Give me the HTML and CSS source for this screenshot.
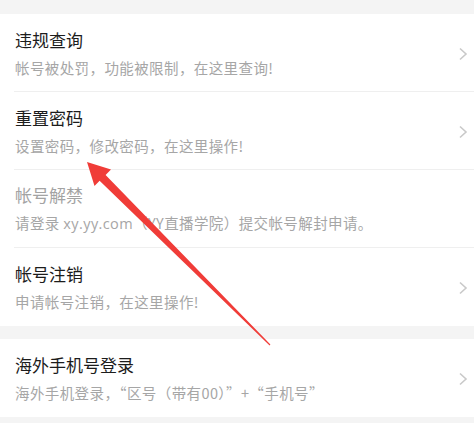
FILE: index.html
```html
<!DOCTYPE html>
<html lang="zh">
<head>
<meta charset="utf-8">
<link rel="stylesheet" href="styles.css">
</head>
<body>
<div class="page">
  <div class="group">
    <div class="item">
      <div class="row">
        <div class="text">
          <div class="title">违规查询</div>
          <div class="sub">帐号被处罚，功能被限制，在这里查询!</div>
        </div>
        <svg class="chev" width="10" height="14" viewBox="0 0 10 14"><polyline points="2,1.5 8,7 2,12.5" fill="none" stroke="#c9c9c9" stroke-width="1.6"/></svg>
      </div>
    </div>
    <div class="item">
      <div class="row">
        <div class="text">
          <div class="title">重置密码</div>
          <div class="sub">设置密码，修改密码，在这里操作!</div>
        </div>
        <svg class="chev" width="10" height="14" viewBox="0 0 10 14"><polyline points="2,1.5 8,7 2,12.5" fill="none" stroke="#c9c9c9" stroke-width="1.6"/></svg>
      </div>
    </div>
    <div class="item">
      <div class="row">
        <div class="text">
          <div class="title disabled">帐号解禁</div>
          <div class="sub">请登录 <span class="latin">xy.yy.com</span>（YY直播学院）提交帐号解封申请。</div>
        </div>
      </div>
    </div>
    <div class="item last">
      <div class="row">
        <div class="text">
          <div class="title">帐号注销</div>
          <div class="sub">申请帐号注销，在这里操作!</div>
        </div>
        <svg class="chev" width="10" height="14" viewBox="0 0 10 14"><polyline points="2,1.5 8,7 2,12.5" fill="none" stroke="#c9c9c9" stroke-width="1.6"/></svg>
      </div>
    </div>
  </div>
  <div class="group">
    <div class="item last">
      <div class="row">
        <div class="text">
          <div class="title">海外手机号登录</div>
          <div class="sub">海外手机登录，“区号（带有00）”+“手机号”</div>
        </div>
        <svg class="chev" width="10" height="14" viewBox="0 0 10 14"><polyline points="2,1.5 8,7 2,12.5" fill="none" stroke="#c9c9c9" stroke-width="1.6"/></svg>
      </div>
    </div>
  </div>
</div>
<svg class="arrow" width="474" height="423" viewBox="0 0 474 423">
  <polygon points="87,162 111,169.5 105.6,175 270.4,344.6 269.6,345.4 99.6,180.8 94.5,186" fill="#f03c38"/>
</svg>
</body>
</html>
```
FILE: styles.css
```css
html, body {
  margin: 0;
  padding: 0;
}
body {
  background: #f4f4f4;
  width: 474px;
  height: 423px;
  overflow: hidden;
  position: relative;
  font-family: "Noto Sans CJK SC", "Noto Sans", sans-serif;
}
.page {
  padding-top: 14px;
  display: flex;
  flex-direction: column;
  gap: 13px;
}
.group {
  background: #ffffff;
}
.item {
  padding-left: 14px;
}
.row {
  height: 78px;
  box-sizing: border-box;
  border-bottom: 1px solid #efefef;
  display: flex;
  align-items: center;
  padding-right: 6px;
}
.item.last .row {
  border-bottom: none;
}
.text {
  flex: 1;
  padding-left: 1px;
  display: flex;
  flex-direction: column;
  gap: 6px;
}
.title {
  font-size: 17px;
  line-height: 24px;
  color: #1c1c1c;
}
.title.disabled {
  color: #a3a3a3;
}
.sub {
  font-size: 14.5px;
  line-height: 20px;
  color: #a6a6a6;
  letter-spacing: 0.4px;
}
.latin {
  font-family: "Open Sans", "Noto Sans", sans-serif;
  font-weight: 400;
}
.chev {
  display: block;
  margin-top: 2px;
}
.arrow {
  position: absolute;
  left: 0;
  top: 0;
}
```
